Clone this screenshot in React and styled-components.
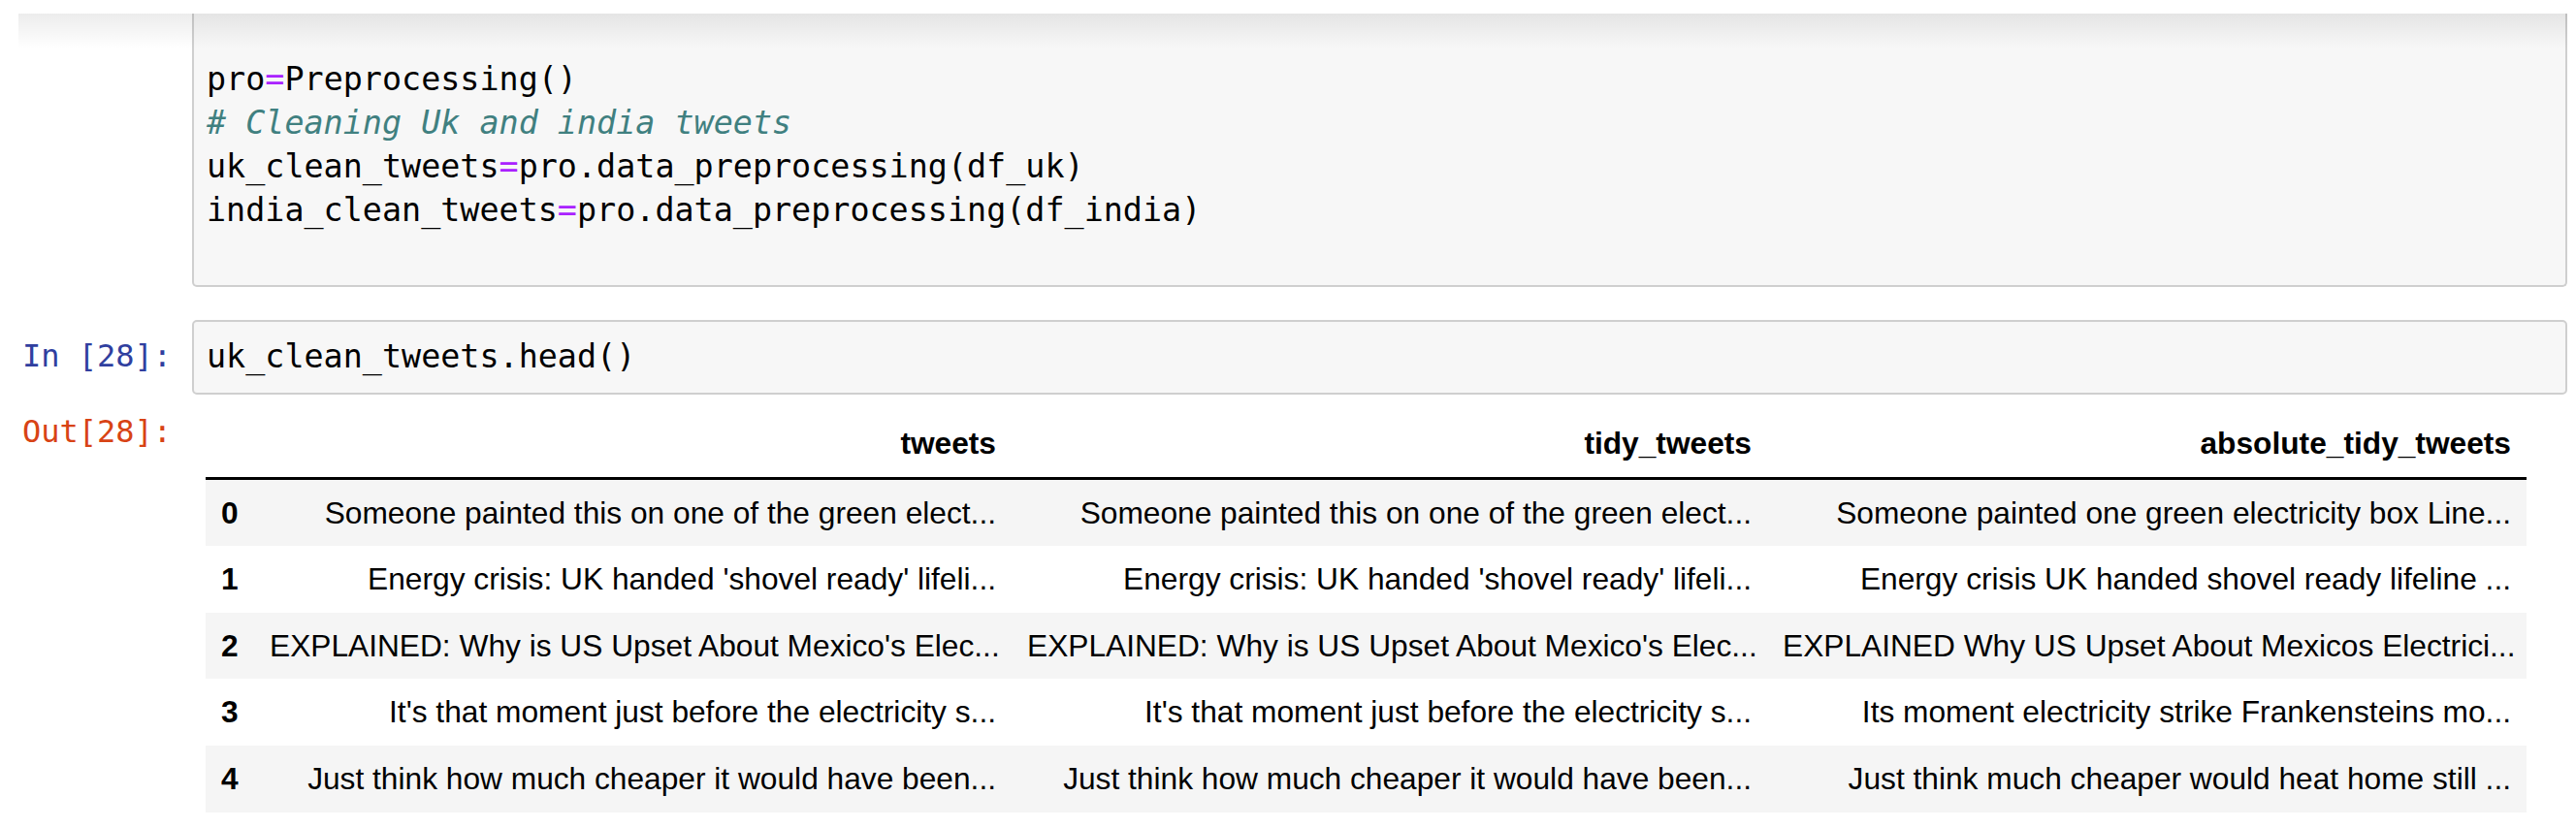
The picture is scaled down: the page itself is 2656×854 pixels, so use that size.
import React from 'react';
import styled, { createGlobalStyle } from 'styled-components';

const GlobalStyle = createGlobalStyle`
  html, body {
    margin: 0;
    padding: 0;
    background: #ffffff;
  }
  body {
    font-family: 'Liberation Sans', Arial, sans-serif;
    color: #000;
  }
`;

const Notebook = styled.div`
  position: relative;
  margin: 14px 9px 0 19px;
  overflow: hidden;

  &::before {
    content: '';
    position: absolute;
    top: 0;
    left: 0;
    right: 0;
    height: 36px;
    background: linear-gradient(rgba(0, 0, 0, 0.075), rgba(0, 0, 0, 0));
    pointer-events: none;
    z-index: 2;
  }
`;

const CellRow = styled.div`
  display: flex;
  align-items: flex-start;
  margin-top: ${props => props.gap || 0}px;
`;

const Prompt = styled.div`
  flex: 0 0 179px;
  box-sizing: border-box;
  padding: ${props => props.top || 0}px 21px 0 0;
  text-align: right;
  font-family: 'DejaVu Sans Mono', monospace;
  font-size: 32px;
  line-height: 45px;
  white-space: pre;
  color: ${props => (props.kind === 'out' ? '#D84315' : '#303F9F')};
`;

const InputArea = styled.div`
  flex: 1;
  min-width: 0;
  background: #f7f7f7;
  border: 2px solid #cfcfcf;
  border-radius: 5px;
  padding: 13px 13px 15px;

  &.clipped {
    border-top: none;
    border-radius: 0 0 5px 5px;
    padding: 0 13px 10px;
  }
`;

const CodeLine = styled.div`
  font-family: 'DejaVu Sans Mono', monospace;
  font-size: 33.4px;
  line-height: 45px;
  height: 45px;
  white-space: pre;
  color: #000;
`;

const Tok = styled.span`
  color: ${props =>
    props.kind === 'op' ? '#AA22FF' : props.kind === 'comment' ? '#408080' : '#000'};
  font-style: ${props => (props.kind === 'comment' ? 'italic' : 'normal')};
`;

const OutputArea = styled.div`
  flex: 1;
  padding: 16px 0 0 14px;
`;

const Table = styled.table`
  border-collapse: collapse;
  border-spacing: 0;
  table-layout: fixed;
  width: 2393px;
  font-family: 'Liberation Sans', Arial, sans-serif;
  font-size: 31.7px;
  line-height: 36.6px;
  color: #000;
`;

const HeadRow = styled.tr`
  border-bottom: 3px solid #000;
`;

const Th = styled.th`
  padding: 16px;
  text-align: right;
  font-weight: bold;
  white-space: nowrap;
  vertical-align: middle;
`;

const BodyRow = styled.tr`
  background: ${props => (props.striped ? '#f5f5f5' : '#ffffff')};
`;

const IndexCell = styled.th`
  padding: 16px;
  text-align: left;
  font-weight: bold;
  white-space: nowrap;
`;

const Td = styled.td`
  padding: 16px;
  text-align: right;
  white-space: nowrap;
  overflow: hidden;
`;

const firstCell = [
  [],
  [{ t: 'pro' }, { t: '=', k: 'op' }, { t: 'Preprocessing()' }],
  [{ t: '# Cleaning Uk and india tweets', k: 'comment' }],
  [{ t: 'uk_clean_tweets' }, { t: '=', k: 'op' }, { t: 'pro.data_preprocessing(df_uk)' }],
  [{ t: 'india_clean_tweets' }, { t: '=', k: 'op' }, { t: 'pro.data_preprocessing(df_india)' }],
  [],
];

const columns = ['tweets', 'tidy_tweets', 'absolute_tidy_tweets'];
const widths = [50, 781, 779, 783];

const rows = [
  [
    'Someone painted this on one of the green elect...',
    'Someone painted this on one of the green elect...',
    'Someone painted one green electricity box Line...',
  ],
  [
    "Energy crisis: UK handed 'shovel ready' lifeli...",
    "Energy crisis: UK handed 'shovel ready' lifeli...",
    'Energy crisis UK handed shovel ready lifeline ...',
  ],
  [
    "EXPLAINED: Why is US Upset About Mexico's Elec...",
    "EXPLAINED: Why is US Upset About Mexico's Elec...",
    'EXPLAINED Why US Upset About Mexicos Electrici...',
  ],
  [
    "It's that moment just before the electricity s...",
    "It's that moment just before the electricity s...",
    'Its moment electricity strike Frankensteins mo...',
  ],
  [
    'Just think how much cheaper it would have been...',
    'Just think how much cheaper it would have been...',
    'Just think much cheaper would heat home still ...',
  ],
];

const Code = ({ lines }) =>
  lines.map((line, i) => (
    <CodeLine key={i}>
      {line.length === 0
        ? '\u00a0'
        : line.map((tok, j) => (
            <Tok key={j} kind={tok.k}>
              {tok.t}
            </Tok>
          ))}
    </CodeLine>
  ));

const App = () => {
  return (
    <>
      <GlobalStyle />
      <Notebook>
        <CellRow>
          <Prompt />
          <InputArea className="clipped">
            <Code lines={firstCell} />
          </InputArea>
        </CellRow>

        <CellRow gap={34}>
          <Prompt top={15}>In [28]:</Prompt>
          <InputArea>
            <CodeLine>uk_clean_tweets.head()</CodeLine>
          </InputArea>
        </CellRow>

        <CellRow>
          <Prompt kind="out" top={16}>Out[28]:</Prompt>
          <OutputArea>
            <Table>
              <colgroup>
                {widths.map((w, i) => (
                  <col key={i} style={{ width: w }} />
                ))}
              </colgroup>
              <thead>
                <HeadRow>
                  <Th />
                  {columns.map(c => (
                    <Th key={c}>{c}</Th>
                  ))}
                </HeadRow>
              </thead>
              <tbody>
                {rows.map((row, i) => (
                  <BodyRow key={i} striped={i % 2 === 0}>
                    <IndexCell>{i}</IndexCell>
                    {row.map((cell, j) => (
                      <Td key={j}>{cell}</Td>
                    ))}
                  </BodyRow>
                ))}
              </tbody>
            </Table>
          </OutputArea>
        </CellRow>
      </Notebook>
    </>
  );
};

export default App;
